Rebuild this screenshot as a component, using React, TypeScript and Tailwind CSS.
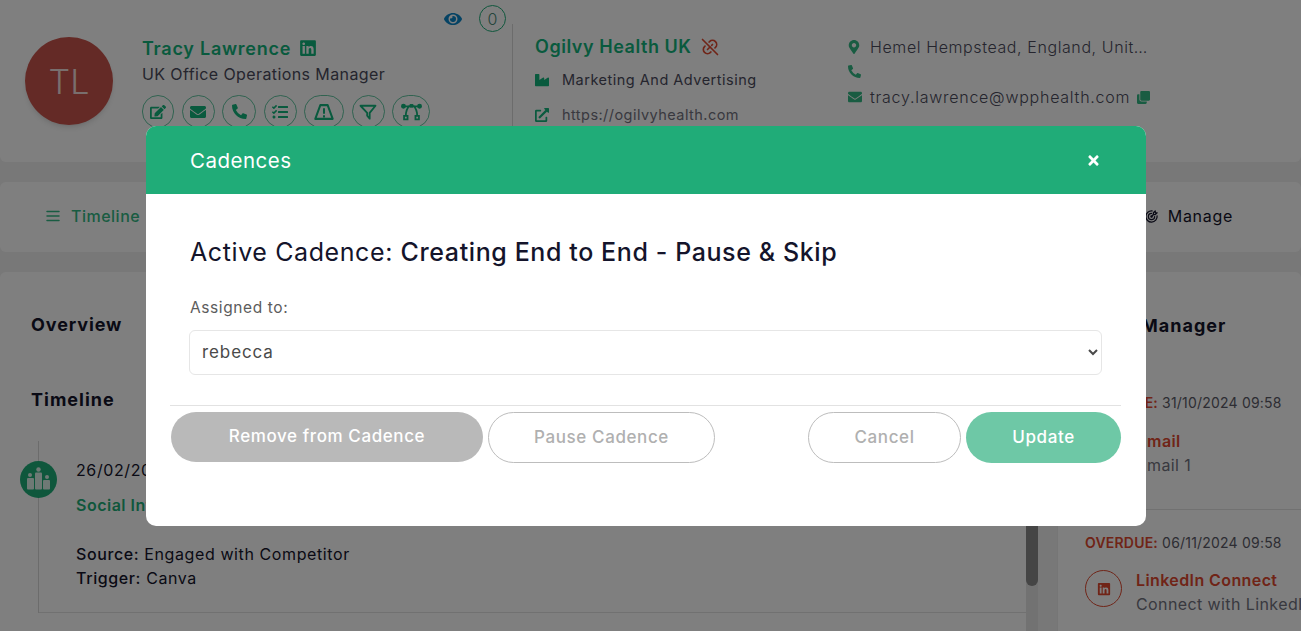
import { FaEdit, FaEnvelope, FaPhoneAlt, FaTasks, FaEye, FaLinkedin, FaMapMarkerAlt, FaIndustry, FaExternalLinkAlt, FaClone, FaTimes } from 'react-icons/fa'
import { TbLinkOff, TbTargetArrow } from 'react-icons/tb'
import { HiOutlineMenu } from 'react-icons/hi'

const font = { fontFamily: 'Inter, "Noto Sans", sans-serif' }

function RoadIcon() {
  return (
    <svg viewBox="0 0 24 24" className="w-[22px] h-[22px]" fill="none" stroke="currentColor" strokeWidth="2.2">
      <path d="M8 4.5h8l5.5 15h-19z" strokeLinejoin="round" />
      <path d="M12 8v6M12 15.5v2.5" />
    </svg>
  )
}

function FunnelIcon() {
  return (
    <svg viewBox="0 0 24 24" className="w-[20px] h-[20px]" fill="none" stroke="currentColor" strokeWidth="2.2" strokeLinejoin="round">
      <path d="M3 4.5h18l-7 8.5v7l-3-3.5v-3.5z" />
    </svg>
  )
}

function BezierIcon() {
  return (
    <svg viewBox="0 0 24 24" className="w-[21px] h-[21px]" fill="none" stroke="currentColor" strokeWidth="2">
      <path d="M3 6h18M10 5c-3 3-4.5 7-4.5 12M14 5c3 3 4.5 7 4.5 12" />
      <circle cx="2.8" cy="6" r="1.8" fill="currentColor" />
      <circle cx="21.2" cy="6" r="1.8" fill="currentColor" />
      <rect x="10" y="3.5" width="4" height="4" fill="currentColor" stroke="none" />
      <rect x="3.5" y="17" width="4" height="4" />
      <rect x="16.5" y="17" width="4" height="4" />
    </svg>
  )
}

function PodiumIcon() {
  return (
    <svg viewBox="0 0 37 37" className="w-[37px] h-[37px]">
      <circle cx="18.5" cy="18.5" r="18.5" fill="#1fae79" />
      <g fill="#ffffff" fillOpacity="0.85">
        <circle cx="18.5" cy="8.5" r="2.2" />
        <rect x="15" y="11.5" width="7" height="17" rx="1" />
        <circle cx="10" cy="14" r="2" />
        <rect x="7" y="17" width="7" height="11.5" rx="1" />
        <circle cx="27" cy="16" r="2" />
        <rect x="23" y="19" width="7" height="9.5" rx="1" />
      </g>
    </svg>
  )
}

function ActionButton({ width, children }: { width: string; children: React.ReactNode }) {
  return (
    <span className={`${width} h-[33px] shrink-0 rounded-full border border-[#1fae79]/70 text-[#12b57c] flex items-center justify-center`}>
      {children}
    </span>
  )
}

function ProfileCard() {
  return (
    <div className="h-[162px] bg-white rounded-b-md flex relative">
      <div className="w-[512px] shrink-0 pl-[25px] pt-[37px] flex gap-[29px]">
        <div className="w-[88px] h-[88px] rounded-full bg-[#c9544c] text-[#f3dedc] text-[34px] font-light flex items-center justify-center shadow-md">TL</div>
        <div>
          <div className="flex items-center gap-2 h-[22px] text-[#12b57c]">
            <span className="text-[18px] font-semibold tracking-[0.75px]">Tracy Lawrence</span>
            <FaLinkedin size={18} />
          </div>
          <div className="text-[16px] text-[#4b4b5c] mt-[3px] leading-6 tracking-[0.4px]">UK Office Operations Manager</div>
          <div className="flex gap-[7.5px] mt-[9px]">
            <ActionButton width="w-[32px]"><FaEdit size={16} /></ActionButton>
            <ActionButton width="w-[33px]"><FaEnvelope size={16} /></ActionButton>
            <ActionButton width="w-[34px]"><FaPhoneAlt size={15} /></ActionButton>
            <ActionButton width="w-[33px]"><FaTasks size={16} /></ActionButton>
            <ActionButton width="w-[40px]"><RoadIcon /></ActionButton>
            <ActionButton width="w-[33px]"><FunnelIcon /></ActionButton>
            <ActionButton width="w-[38px]"><BezierIcon /></ActionButton>
          </div>
        </div>
      </div>
      <div className="absolute left-[444px] top-[5px] flex items-center gap-[17px]">
        <FaEye size={18} className="text-[#0b86c9]" />
        <span className="w-[27px] h-[27px] rounded-full border border-[#1fae79] text-[#4b8a78] text-[16px] font-light flex items-center justify-center">0</span>
      </div>
      <div className="w-px h-[102px] mt-[24px] bg-[#d8d8d8] shrink-0" />
      <div className="w-[335px] shrink-0 pl-[22px] pt-[35px]">
        <div className="flex items-center gap-2 text-[#12b57c]">
          <span className="text-[18px] font-semibold leading-6 tracking-[0.55px]">Ogilvy Health UK</span>
          <TbLinkOff size={20} className="text-[#e0492f]" />
        </div>
        <div className="flex items-center gap-[13px] mt-[9px] text-[14.5px] text-[#4b4b5c] leading-6 tracking-[0.5px]">
          <FaIndustry size={14} className="text-[#12b57c]" />
          Marketing And Advertising
        </div>
        <div className="flex items-center gap-[13px] mt-[11px] text-[14.5px] text-[#72727f] leading-6 tracking-[0.45px]">
          <FaExternalLinkAlt size={14} className="text-[#12b57c]" />
          https://ogilvyhealth.com
        </div>
      </div>
      <div className="pt-[36px] text-[16px] text-[#4b4b5c] tracking-[0.6px] font-light">
        <div className="flex items-center gap-[10px] leading-[22px]">
          <FaMapMarkerAlt size={14} className="text-[#33b984] w-[12px]" />
          <span className="w-[279px] truncate">Hemel Hempstead, England, United Kingdom</span>
        </div>
        <div className="h-[24px] flex items-center text-[#33b984] mt-[1px]"><FaPhoneAlt size={13} /></div>
        <div className="flex items-center gap-[8px] leading-[22px] mt-[3px]">
          <FaEnvelope size={14} className="text-[#33b984]" />
          <span className="tracking-[0.75px]">tracy.lawrence@wpphealth.com</span>
          <FaClone size={13} className="text-[#33b984] -ml-[1px]" />
        </div>
      </div>
    </div>
  )
}

function NavCard() {
  return (
    <div className="h-[70px] mt-[20px] pb-[2px] bg-white rounded-md flex items-center justify-between pl-[44px] pr-[68px]">
      <div className="flex items-center gap-[9px] text-[#33b984] text-[16px] font-medium tracking-[0.5px]">
        <HiOutlineMenu size={18} />
        Timeline
      </div>
      <div className="flex items-center gap-[9px] text-[#14142b] text-[16px] tracking-[0.7px]">
        <TbTargetArrow size={15} />
        Manage
      </div>
    </div>
  )
}

function TimelineColumn() {
  return (
    <div className="w-[1026px] shrink-0 pt-[41px]">
      <div className="pl-[31px] text-[18px] font-bold text-[#14142b] leading-6 tracking-[0.9px]">Overview</div>
      <div className="pl-[31px] mt-[51px] text-[18px] font-bold text-[#14142b] leading-6 tracking-[1px]">Timeline</div>
      <div className="ml-[38px] mt-[29px] border-l border-[#d8d8d8] pt-[20px]">
        <div className="flex border-b border-[#e2e2e2] pb-[22px]">
          <div className="-ml-[19px] w-[37px] shrink-0"><PodiumIcon /></div>
          <div className="pl-[19px] -mt-[1px] text-[16px] text-[#14142b] tracking-[0.6px]">
            <div className="leading-5">26/02/2025</div>
            <div className="mt-[15px] leading-5 font-semibold text-[#1fae79] tracking-[0.5px]">Social Intent</div>
            <div className="mt-[27px] leading-6"><span className="font-medium">Source:</span> Engaged with Competitor</div>
            <div className="leading-6"><span className="font-medium">Trigger:</span> Canva</div>
          </div>
        </div>
      </div>
    </div>
  )
}

function ManagerColumn() {
  return (
    <div className="flex-1 min-w-0 pt-[42px] pl-[27px] border-l border-[#ececec] overflow-hidden">
      <div className="pl-[56px] text-[18px] font-bold text-[#14142b] leading-6 tracking-[1px]">Manager</div>
      <div className="mt-[55px] text-[14px] text-[#5a5a66] leading-5 whitespace-nowrap tracking-[0.2px]"><span className="font-semibold text-[#e0492f]">OVERDUE:</span> 31/10/2024 09:58</div>
      <div className="pl-[52px] mt-[18px] text-[#e0492f] text-[16px] font-semibold leading-5 tracking-[0.4px]">Email</div>
      <div className="pl-[52px] mt-[4px] text-[#72727f] text-[16px] leading-5 tracking-[0.4px]">Email 1</div>
      <div className="border-t border-[#e2e2e2] mt-[34px] -mr-4" />
      <div className="mt-[23px] text-[14px] text-[#5a5a66] leading-5 whitespace-nowrap tracking-[0.2px]"><span className="font-semibold text-[#e0492f]">OVERDUE:</span> 06/11/2024 09:58</div>
      <div className="flex gap-[14px] mt-[17px] whitespace-nowrap">
        <span className="w-[37px] h-[37px] shrink-0 rounded-full border border-[#e0492f] text-[#e0492f] flex items-center justify-center"><FaLinkedin size={14} /></span>
        <div>
          <div className="text-[#e0492f] text-[16px] font-semibold leading-5 tracking-[0.4px]">LinkedIn Connect</div>
          <div className="text-[#72727f] text-[16px] leading-5 mt-[4px] tracking-[0.4px]">Connect with LinkedIn</div>
        </div>
      </div>
    </div>
  )
}

function CadenceModal() {
  return (
    <div className="absolute inset-0 bg-black/50 pl-[146px] pt-[126px]">
      <div className="w-[1000px] h-[400px] bg-white rounded-[10px] overflow-hidden">
        <div className="h-[68px] bg-[#20ac78] text-white flex items-center justify-between pl-[44px] pr-[45px]">
          <span className="text-[20.5px] tracking-[0.5px] pt-[2px]">Cadences</span>
          <FaTimes size={15} />
        </div>
        <div className="px-[24px]">
          <h2 className="pl-[20px] mt-[40px] text-[25px] leading-9 text-[#14142b] tracking-[0.6px] whitespace-nowrap">
            Active Cadence: <span className="font-medium">Creating End to End - Pause &amp; Skip</span>
          </h2>
          <div className="pl-[20px] mt-[26px] text-[15.5px] leading-6 text-[#5c5c5c] tracking-[0.6px]">Assigned to:</div>
          <div className="pl-[19px] pr-[20px] mt-[10px]">
            <select defaultValue="rebecca" className="w-full h-[45px] rounded-md border border-[#e6e6e6] pl-[8px] pb-[2px] text-[17px] text-[#4a4a4a] bg-white tracking-[0.9px]">
              <option value="rebecca">rebecca</option>
            </select>
          </div>
          <div className="flex gap-[5px] mt-[30px] border-t border-[#e2e2e2] pt-[6px] w-[951px] text-[17px] font-medium tracking-[0.6px]">
            <button className="w-[312px] h-[50px] ml-[1px] rounded-full bg-[#b9b9b9] text-white">Remove from Cadence</button>
            <button className="w-[227px] h-[51px] rounded-full border border-[#bdbdbd] text-[#b0b0b0]">Pause Cadence</button>
            <button className="w-[153px] h-[51px] ml-auto rounded-full border border-[#bdbdbd] text-[#b0b0b0]">Cancel</button>
            <button className="w-[155px] h-[51px] rounded-full bg-[#6ec8a6] text-white">Update</button>
          </div>
        </div>
      </div>
    </div>
  )
}

export default function App() {
  return (
    <div className="relative h-screen overflow-hidden bg-[#f1f1f1]" style={font}>
      <ProfileCard />
      <NavCard />
      <div className="mt-[20px] bg-white rounded-md h-[500px] flex relative">
        <TimelineColumn />
        <div className="w-[12px] shrink-0 bg-[#e4e4e4]">
          <div className="h-[314px] bg-[#8a8a8a] rounded-b-md" />
        </div>
        <div className="w-[19px] shrink-0 bg-[#f1f1f1]" />
        <ManagerColumn />
      </div>
      <CadenceModal />
    </div>
  )
}
